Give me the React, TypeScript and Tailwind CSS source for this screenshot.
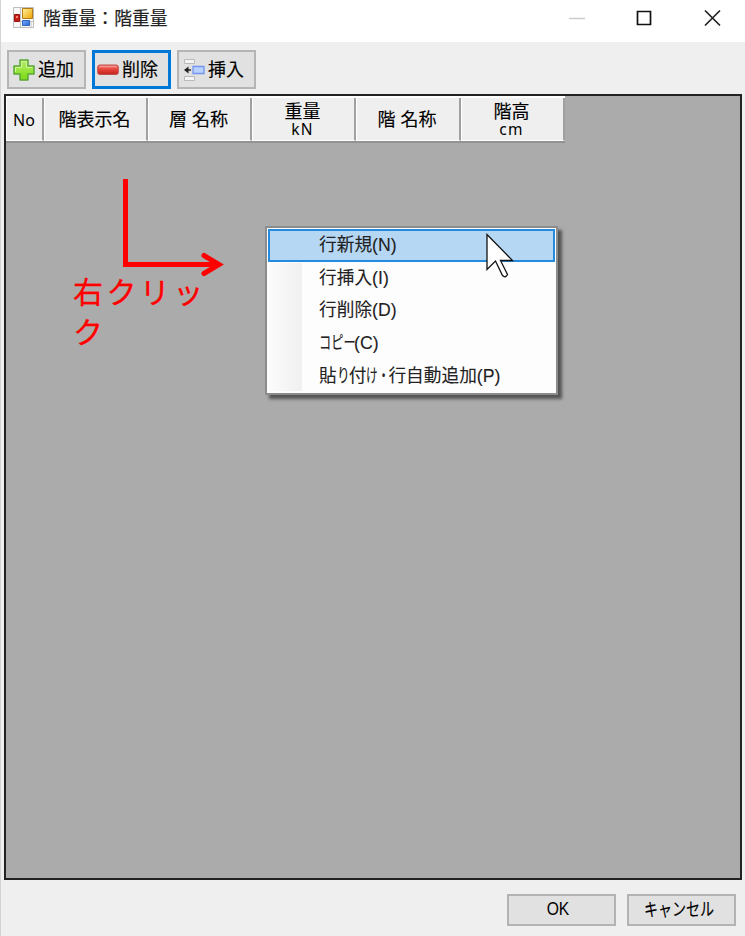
import type { ReactNode } from 'react';

const columns: { width: string; label: string; unit?: string }[] = [
  { width: 'w-[38px]', label: 'No' },
  { width: 'w-[104px]', label: '階表示名' },
  { width: 'w-[104px]', label: '層 名称' },
  { width: 'w-[104px]', label: '重量', unit: 'kN' },
  { width: 'w-[105px]', label: '階 名称' },
  { width: 'w-[104px]', label: '階高', unit: 'cm' },
];

function FormIcon() {
  return (
    <svg width="21" height="21" viewBox="0 0 21 21" className="block">
      <defs>
        <linearGradient id="gold" x2="1" y2="1">
          <stop stopColor="#fff1a0" />
          <stop offset="1" stopColor="#eda500" />
        </linearGradient>
        <linearGradient id="cobalt" x2="1" y2="1">
          <stop stopColor="#78b0ff" />
          <stop offset="1" stopColor="#2463d4" />
        </linearGradient>
      </defs>
      <path d="M.5.5h20v20H.5z" fill="#f8f8f8" stroke="#bdbdbd" />
      <path d="M7.5 1v19M1 14.5h19M18 14v6" stroke="#c5c5c5" />
      <path d="M9.500 1.500h10v10h-10z" fill="url(#gold)" stroke="#b67a13" />
      <path d="M1.500 7.500h5v7h-5z" fill="#c51e17" stroke="#981711" />
      <path d="M3 9h2v2H3z" fill="#ff8271" />
      <path d="M9.500 13.500h7v5h-7z" fill="url(#cobalt)" stroke="#3467b9" />
    </svg>
  );
}

function PlusIcon() {
  return (
    <svg width="22" height="22" viewBox="0 0 22 22" className="block">
      <defs>
        <linearGradient id="lime" x2="0" y2="1">
          <stop stopColor="#b8ed69" />
          <stop offset="1" stopColor="#79dc12" />
        </linearGradient>
      </defs>
      <path d="M7 1h8v6h6v8h-6v6H7v-6H1V7h6z" fill="url(#lime)" stroke="#5aa637" strokeWidth="1.500" strokeLinejoin="round" />
      <path d="M8.500 2.500h5v6h6M2.500 13V8.500h6v-6" fill="none" stroke="#d1f79a" />
    </svg>
  );
}

function MinusIcon() {
  return (
    <svg width="22" height="12" viewBox="0 0 22 12" className="block">
      <defs>
        <linearGradient id="crimson" x2="0" y2="1">
          <stop stopColor="#f27a70" />
          <stop offset=".55" stopColor="#e33c33" />
          <stop offset="1" stopColor="#bc2620" />
        </linearGradient>
      </defs>
      <rect x=".7" y="1" width="20.600" height="9.500" rx="2" fill="url(#crimson)" stroke="#c0504a" />
      <path d="M2.500 2.700h17" stroke="#f7a19b" />
    </svg>
  );
}

function InsertIcon() {
  return (
    <svg width="22" height="24" viewBox="0 0 22 24" className="block">
      <path d="M1.500 1.500h10v4h-10zM1.500 18.500h10v4h-10z" fill="#f4f4f4" stroke="#b9b9b9" />
      <path d="M10 8.500h11v7H10z" fill="#b9d1ff" stroke="#7495ef" strokeWidth="1.300" />
      <path d="M3 12h5" fill="none" stroke="#222" strokeWidth="1.500" />
      <path d="M1 12 5.500 8.500v7z" fill="#222" />
    </svg>
  );
}

function ToolButton({ icon, children, focused = false }: { icon: ReactNode; children: ReactNode; focused?: boolean }) {
  return (
    <button
      className={
        focused
          ? 'flex h-[39px] w-[79px] items-center border-[3px] border-[#0078d7] bg-[#e1e1e1] pl-[2px]'
          : 'flex h-[39px] w-[79px] items-center border-2 border-[#b5b5b5] bg-[#e1e1e1] pl-1'
      }
    >
      <span className="w-[25px] shrink-0">{icon}</span>
      <span className="text-[18px] leading-none whitespace-nowrap [-webkit-text-stroke:0.15px]">{children}</span>
    </button>
  );
}

function MenuItem({ children, active = false }: { children: ReactNode; active?: boolean }) {
  return (
    <div
      className={
        active
          ? 'mr-px flex h-[33px] items-center border-2 border-[#278bdd] bg-[#b5d7f3] pl-[49px]'
          : 'flex h-[32.75px] items-center pl-[51px]'
      }
    >
      <span className="text-[17.7px] leading-none whitespace-nowrap text-[#222] [-webkit-text-stroke:0.1px]">{children}</span>
    </div>
  );
}

function Shortcut({ letter }: { letter: string }) {
  return <span className="inline-block origin-left">({letter})</span>;
}

function ContextMenu() {
  return (
    <div className="absolute top-[226px] left-[264px] h-[169px] w-[293px] border-2 border-[#8c8c8c] bg-[#fdfdfd] shadow-[4px_4px_3px_rgba(0,0,0,0.5)]">
      <div className="absolute top-[35px] bottom-[2px] left-px w-[34px] bg-linear-to-r from-[#fcfcfc] to-[#f0f0f0]" />
      <div className="relative pt-px pl-px">
        <MenuItem active>行新規<Shortcut letter="N" /></MenuItem>
        <MenuItem>行挿入<Shortcut letter="I" /></MenuItem>
        <MenuItem>行削除<Shortcut letter="D" /></MenuItem>
        <MenuItem>
          <span className="inline-block w-[35px]">
            <span className="inline-block origin-left scale-x-[0.69]">コピー</span>
          </span>
          <Shortcut letter="C" />
        </MenuItem>
        <MenuItem>
          貼
          <span className="inline-block w-[12px]"><span className="inline-block origin-left scale-x-[0.72]">り</span></span>
          付
          <span className="inline-block w-[22px]"><span className="inline-block origin-left scale-x-[0.66]">け・</span></span>
          行自動追加<Shortcut letter="P" />
        </MenuItem>
      </div>
      <svg width="30" height="47" viewBox="0 0 30 47" className="absolute top-[5px] left-[219px]">
        <path d="M1 1.500v35l8.500-8.500 7 14.500q3 3 5-1L14.500 27.500h12z" fill="#fff" stroke="#111" strokeWidth="1.300" />
      </svg>
    </div>
  );
}

function Annotation() {
  return (
    <div className="absolute top-[178px] left-[72px] w-[155px] text-[#ff0000]">
      <svg width="155" height="100" viewBox="0 0 155 100" className="block">
        <path d="M52.500 1v85.500H144" fill="none" stroke="currentColor" strokeWidth="5" />
        <path d="M131 77.500 146 86.500 131 95.500" fill="none" stroke="currentColor" strokeWidth="5" strokeLinecap="round" />
      </svg>
      <div className="-mt-[5px] text-[30px] leading-10 tracking-[3.4px] whitespace-nowrap [-webkit-text-stroke:0.3px]">
        右クリッ<br />ク
      </div>
    </div>
  );
}

export default function App() {
  return (
    <main className="relative flex h-[936px] w-[745px] flex-col overflow-hidden border-l border-[#d3d3d3] bg-[#efefef] font-['Liberation_Sans','Noto_Sans_CJK_JP',sans-serif] text-black">
      <header className="flex h-[42px] shrink-0 items-start bg-white pl-3">
        <div className="mt-[7px]"><FormIcon /></div>
        <h1 className="mt-[9px] ml-[9px] text-[17.8px] leading-[20px] text-[#222] [-webkit-text-stroke:0.2px]">階重量：階重量</h1>
        <svg width="155" height="20" viewBox="0 0 155 20" className="mt-[8px] mr-[22px] ml-auto">
          <path d="M1 10.500h16" stroke="#ccc" strokeWidth="1.500" />
          <path d="M69.500 3.500h13v13h-13z" fill="none" stroke="#111" strokeWidth="1.700" />
          <path d="m137 2.500 15 15m0-15-15 15" stroke="#222" strokeWidth="1.700" />
        </svg>
      </header>

      <div className="flex h-[52px] shrink-0 gap-[6px] pt-2 pl-[6px]">
        <ToolButton icon={<PlusIcon />}>追加</ToolButton>
        <ToolButton focused icon={<MinusIcon />}>削除</ToolButton>
        <ToolButton icon={<InsertIcon />}>挿入</ToolButton>
      </div>

      <section className="ml-[3px] h-[786px] w-[738px] shrink-0 border-2 border-[#222] bg-[#ababab]">
        <div className="flex h-[47px] w-[559px] border-b-2 border-[#929292] bg-white pt-[2px]">
          {columns.map(({ width, label, unit }) => (
            <div
              key={label}
              className={`${width} flex shrink-0 flex-col items-center justify-center border-r-2 border-b border-l border-r-[#a0a0a0] border-b-white border-l-white bg-[#efefef] pt-[2px] pr-[2px] text-[18px] leading-[18px] [-webkit-text-stroke:0.15px]`}
            >
              {label === 'No' ? (
                <span className="pl-px font-['Noto_Sans'] text-[16px] [-webkit-text-stroke:0]">{label}</span>
              ) : (
                <span>{label}</span>
              )}
              {unit && <span className="font-['Noto_Sans'] text-[15.5px] leading-[16px] tracking-[1.2px] [-webkit-text-stroke:0]">{unit}</span>}
            </div>
          ))}
        </div>
      </section>

      <footer className="flex flex-1 justify-end gap-[11px] pt-[14px] pr-[9px]">
        <button className="flex h-8 w-[109px] items-center justify-center border-2 border-[#b3b3b3] bg-[#e1e1e1] pr-[6px] pb-[2px] text-[18px] leading-none">
          <span className="scale-x-[0.87]">OK</span>
        </button>
        <button className="flex h-8 w-[109px] items-center justify-center border-2 border-[#b3b3b3] bg-[#e1e1e1] pr-[6px] text-[18px] leading-none">
          <span className="scale-x-[0.78] whitespace-nowrap [-webkit-text-stroke:0.15px]">キャンセル</span>
        </button>
      </footer>

      <Annotation />
      <ContextMenu />
    </main>
  );
}
